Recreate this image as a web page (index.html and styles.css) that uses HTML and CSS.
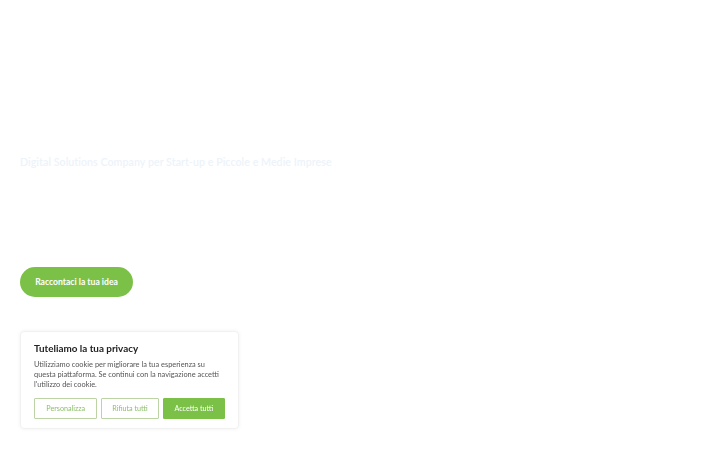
FILE: index.html
```html
<!DOCTYPE html>
<html lang="it">
<head>
<meta charset="utf-8">
<title>Digital Solutions</title>
<link rel="stylesheet" href="styles.css">
</head>
<body>
<main class="hero">
  <p class="subtitle">Digital Solutions Company per Start-up e Piccole e Medie Imprese</p>
  <a class="cta" href="#">Raccontaci la tua idea</a>
</main>
<aside class="cookie">
  <h2 class="cookie-title">Tuteliamo la tua privacy</h2>
  <p class="cookie-text">Utilizziamo cookie per migliorare la tua esperienza su questa piattaforma. Se continui con la navigazione accetti l'utilizzo dei cookie.</p>
  <div class="cookie-actions">
    <button class="btn btn-outline btn-a">Personalizza</button>
    <button class="btn btn-outline btn-b">Rifiuta tutti</button>
    <button class="btn btn-fill btn-c">Accetta tutti</button>
  </div>
</aside>
</body>
</html>
```
FILE: styles.css
```css
* { box-sizing: border-box; }
html, body { margin: 0; padding: 0; background: #fff; }
body {
  font-family: Lato, "Open Sans", "Liberation Sans", sans-serif;
  width: 720px;
  height: 450px;
  overflow: hidden;
}
.hero {
  padding: 155px 20px 0 20px;
  display: flex;
  flex-direction: column;
  align-items: flex-start;
}
.subtitle {
  margin: 0;
  font-size: 10.65px;
  line-height: 14px;
  font-weight: 600;
  color: #edf3fa;
  letter-spacing: 0.05px;
}
.cta {
  margin-top: 98px;
  display: flex;
  align-items: center;
  justify-content: center;
  width: 113px;
  height: 30px;
  border-radius: 15px;
  background: #7bc147;
  color: #fff;
  font-size: 8.6px;
  font-weight: 700;
  text-decoration: none;
}
.cookie {
  position: fixed;
  left: 20px;
  bottom: 21px;
  width: 219px;
  height: 98px;
  background: #fff;
  border: 1px solid #f1f1f1;
  border-radius: 4px;
  box-shadow: 0 0 4px rgba(0,0,0,0.06);
  padding: 9px 13px 0 13px;
}
.cookie-title {
  margin: 0;
  font-size: 9.9px;
  line-height: 14px;
  font-weight: 700;
  color: #222;
}
.cookie-text {
  margin: 5px 0 0 0;
  font-size: 7.4px;
  line-height: 10px;
  color: #555;
}
.cookie-actions {
  margin-top: 8px;
  display: flex;
  gap: 4px;
}
.btn {
  height: 21px;
  padding: 0;
  font-family: inherit;
  font-size: 7.2px;
  border-radius: 1px;
  cursor: pointer;
}
.btn-a { width: 64px; }
.btn-b { width: 58px; }
.btn-c { width: 63px; }
.btn-outline {
  background: #fff;
  border: 1.5px solid #bcd3a6;
  color: #8cbf68;
}
.btn-fill {
  background: #7bc147;
  border: 1.5px solid #7bc147;
  color: #fff;
}
```
